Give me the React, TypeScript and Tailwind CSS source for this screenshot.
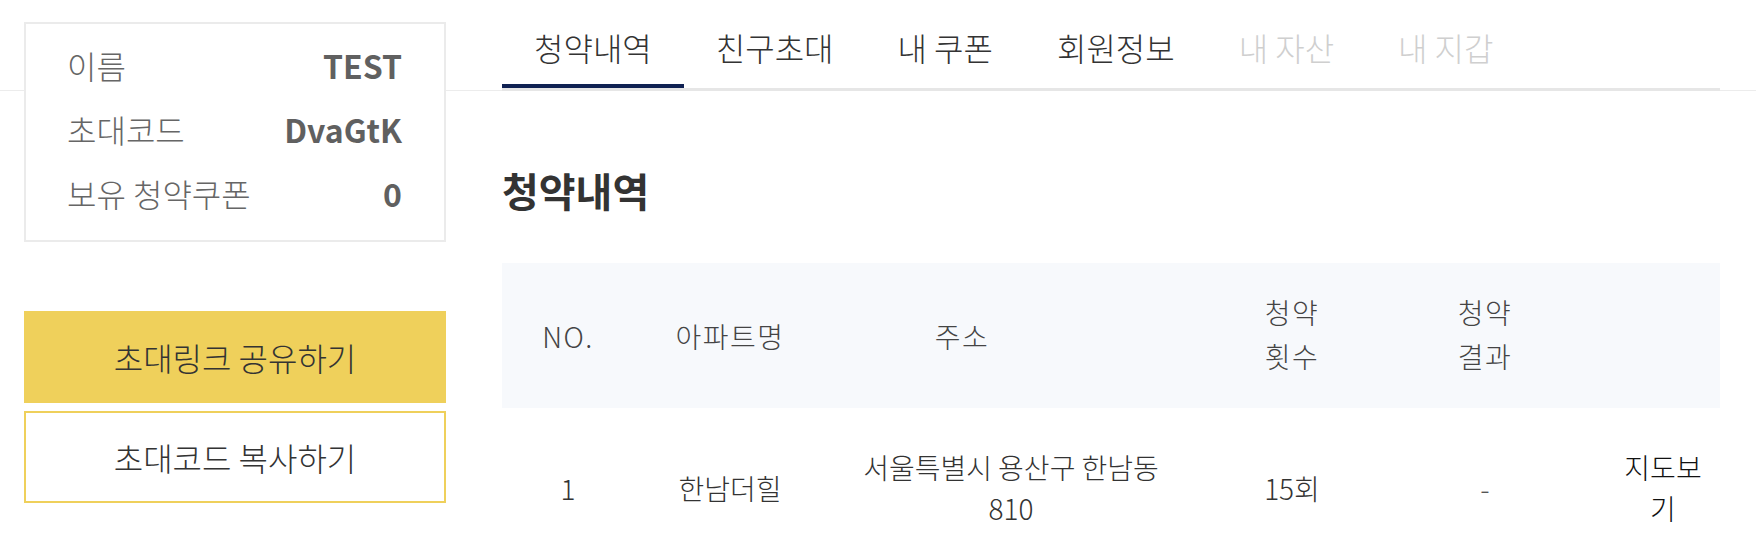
import React from "react";

const tabs = [
  { label: "청약내역", state: "active" },
  { label: "친구초대", state: "normal" },
  { label: "내 쿠폰", state: "normal" },
  { label: "회원정보", state: "normal" },
  { label: "내 자산", state: "disabled" },
  { label: "내 지갑", state: "disabled" },
];

const info = [
  { label: "이름", value: "TEST" },
  { label: "초대코드", value: "DvaGtK" },
  { label: "보유 청약쿠폰", value: "0" },
];

const cols = "grid grid-cols-[132px_192px_370px_192px_194px_24px_114px]";

export default function App() {
  return (
    <div className="w-[1756px] h-[542px] overflow-hidden bg-white font-['Noto_Sans_CJK_KR','Noto_Sans',sans-serif]">
      <div className="h-[91px] border-b border-[#ececec]" />
      <div className="-mt-[91px] flex items-start">
        <aside className="relative ml-[24px] mt-[22px] w-[422px] flex flex-col">
          <div className="border-2 border-[#ebebeb] bg-white pl-[41px] pr-[42px] pt-[9px] pb-[15px]">
            {info.map((r) => (
              <div
                key={r.label}
                className="h-[64px] flex items-center justify-between text-[32px] text-[#666]"
              >
                <span className="font-light">{r.label}</span>
                <span className="font-bold text-[#606060]">{r.value}</span>
              </div>
            ))}
          </div>
          <button className="mt-[69px] h-[92px] w-full bg-[#efd05b] text-[32px] font-light text-[#333]">
            초대링크 공유하기
          </button>
          <button className="mt-[8px] h-[92px] w-full border-2 border-[#efd05b] bg-white text-[32px] font-light text-[#333]">
            초대코드 복사하기
          </button>
        </aside>

        <main className="relative ml-[56px] w-[1218px]">
          <nav className="flex border-b-[3px] border-[#e6e6e6] bg-white">
            {tabs.map((t) => (
              <div
                key={t.label}
                className={
                  "h-[88px] px-[32px] pt-[9px] flex items-center text-[32px] font-light border-b-4 " +
                  (t.state === "active"
                    ? "border-[#0f2152] text-[#333]"
                    : t.state === "disabled"
                    ? "border-transparent text-[#cfcfcf]"
                    : "border-transparent text-[#333]")
                }
              >
                {t.label}
              </div>
            ))}
          </nav>

          <h2 className="mt-[72px] text-[40px] leading-[54px] font-bold text-[#333]">청약내역</h2>

          <div className="mt-[46px]">
            <div
              className={
                cols +
                " h-[145px] bg-[#f7f9fc] items-center text-center text-[28px] font-light tracking-[1.5px] leading-[44px] text-[#444]"
              }
            >
              <div>NO.</div>
              <div>아파트명</div>
              <div className="pr-[98px]">주소</div>
              <div className="-mt-[4px]">
                청약
                <br />
                횟수
              </div>
              <div className="-mt-[4px]">
                청약
                <br />
                결과
              </div>
              <div />
              <div />
            </div>
            <div
              className={
                cols + " h-[160px] items-center text-center text-[28px] font-light leading-[41px] text-[#333]"
              }
            >
              <div>1</div>
              <div>한남더힐</div>
              <div className="px-[30px]">서울특별시 용산구 한남동 810</div>
              <div>15회</div>
              <div className="text-[#555]">-</div>
              <div />
              <div className="px-[14px] text-[#111]">지도보기</div>
            </div>
          </div>
        </main>
      </div>
    </div>
  );
}
